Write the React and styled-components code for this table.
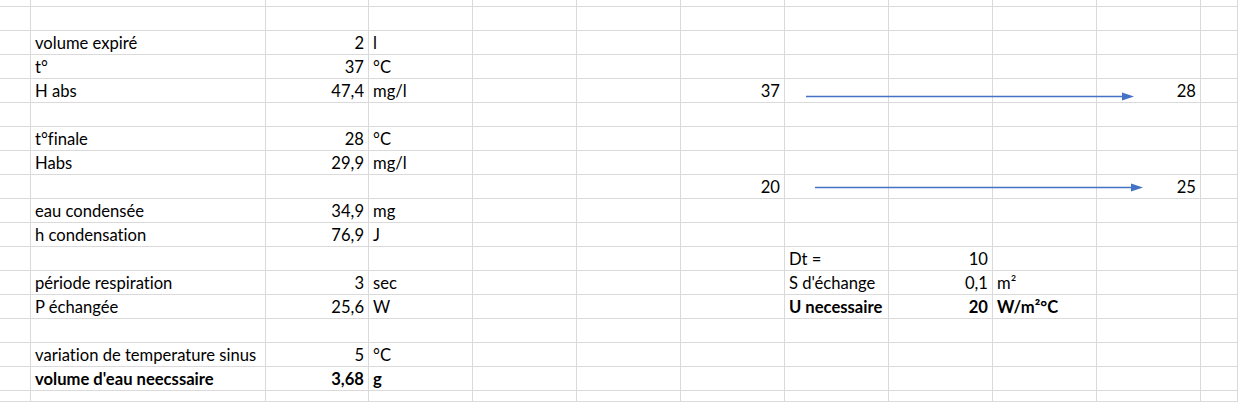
import React from "react";
import styled, { createGlobalStyle } from "styled-components";

const Global = createGlobalStyle`
  html, body { margin: 0; padding: 0; background: #ffffff; }
  body { width: 1238px; height: 402px; overflow: hidden; }
`;

const Sheet = styled.div`
  position: relative;
  width: 1238px;
  height: 402px;
  overflow: hidden;
  display: grid;
  grid-template-columns: 31px 235px 103px repeat(8, 104px) 37px;
  grid-template-rows: 7px repeat(16, 24px) 11px;
  font-family: Lato, "Open Sans", sans-serif;
  font-size: 16.6px;
  font-variant-ligatures: none;
  color: #000000;
`;

const Cell = styled.div`
  box-sizing: border-box;
  border-right: 1px solid #dadada;
  border-bottom: 1px solid #dadada;
  display: flex;
  align-items: flex-end;
  justify-content: ${(p) => (p.$align === "right" ? "flex-end" : "flex-start")};
  padding: 0 ${(p) => (p.$align === "right" ? "4px" : "0")} 1px
    ${(p) => (p.$align === "right" ? "0" : "4px")};
  line-height: 20px;
  font-weight: ${(p) => (p.$bold ? 700 : 400)};
  white-space: nowrap;
  overflow: visible;
`;

const Arrows = styled.svg`
  position: absolute;
  left: 0;
  top: 0;
  width: 1238px;
  height: 402px;
  pointer-events: none;
`;

// columns: 0=A 1=B 2=C 3=D 4=E 5=F 6=G 7=H 8=I 9=J 10=K 11=L
const R = "right";
const L = "left";
const data = {
  2: { 1: ["volume expiré", L], 2: ["2", R], 3: ["l", L] },
  3: { 1: ["t°", L], 2: ["37", R], 3: ["°C", L] },
  4: { 1: ["H abs", L], 2: ["47,4", R], 3: ["mg/l", L], 6: ["37", R], 10: ["28", R] },
  6: { 1: ["t°finale", L], 2: ["28", R], 3: ["°C", L] },
  7: { 1: ["Habs", L], 2: ["29,9", R], 3: ["mg/l", L] },
  8: { 6: ["20", R], 10: ["25", R] },
  9: { 1: ["eau condensée", L], 2: ["34,9", R], 3: ["mg", L] },
  10: { 1: ["h condensation", L], 2: ["76,9", R], 3: ["J", L] },
  11: { 7: ["Dt =", L], 8: ["10", R] },
  12: {
    1: ["période respiration", L],
    2: ["3", R],
    3: ["sec", L],
    7: ["S d'échange", L],
    8: ["0,1", R],
    9: ["m²", L],
  },
  13: {
    1: ["P échangée", L],
    2: ["25,6", R],
    3: ["W", L],
    7: ["U necessaire", L, true],
    8: ["20", R, true],
    9: ["W/m²°C", L, true],
  },
  15: { 1: ["variation de temperature sinus", L], 2: ["5", R], 3: ["°C", L] },
  16: { 1: ["volume d'eau neecssaire", L, true], 2: ["3,68", R, true], 3: ["g", L, true] },
};

const ROWS = 18;
const COLS = 12;

function Arrow({ x1, x2, y, color = "#4472C4" }) {
  const head = 12;
  return (
    <g>
      <line x1={x1} y1={y} x2={x2 - head + 1} y2={y} stroke={color} strokeWidth="1.3" />
      <polygon points={`${x2 - head},${y - 4} ${x2},${y} ${x2 - head},${y + 4}`} fill={color} />
    </g>
  );
}

export default function App() {
  const cells = [];
  for (let r = 0; r < ROWS; r++) {
    for (let c = 0; c < COLS; c++) {
      const d = data[r] && data[r][c];
      cells.push(
        <Cell key={`${r}-${c}`} $align={d ? d[1] : L} $bold={d ? d[2] : false}>
          {d ? d[0] : null}
        </Cell>
      );
    }
  }
  return (
    <>
      <Global />
      <Sheet>
        {cells}
        <Arrows viewBox="0 0 1238 402">
          <Arrow x1={806} x2={1134} y={96.5} />
          <Arrow x1={815} x2={1143} y={187.5} />
        </Arrows>
      </Sheet>
    </>
  );
}
